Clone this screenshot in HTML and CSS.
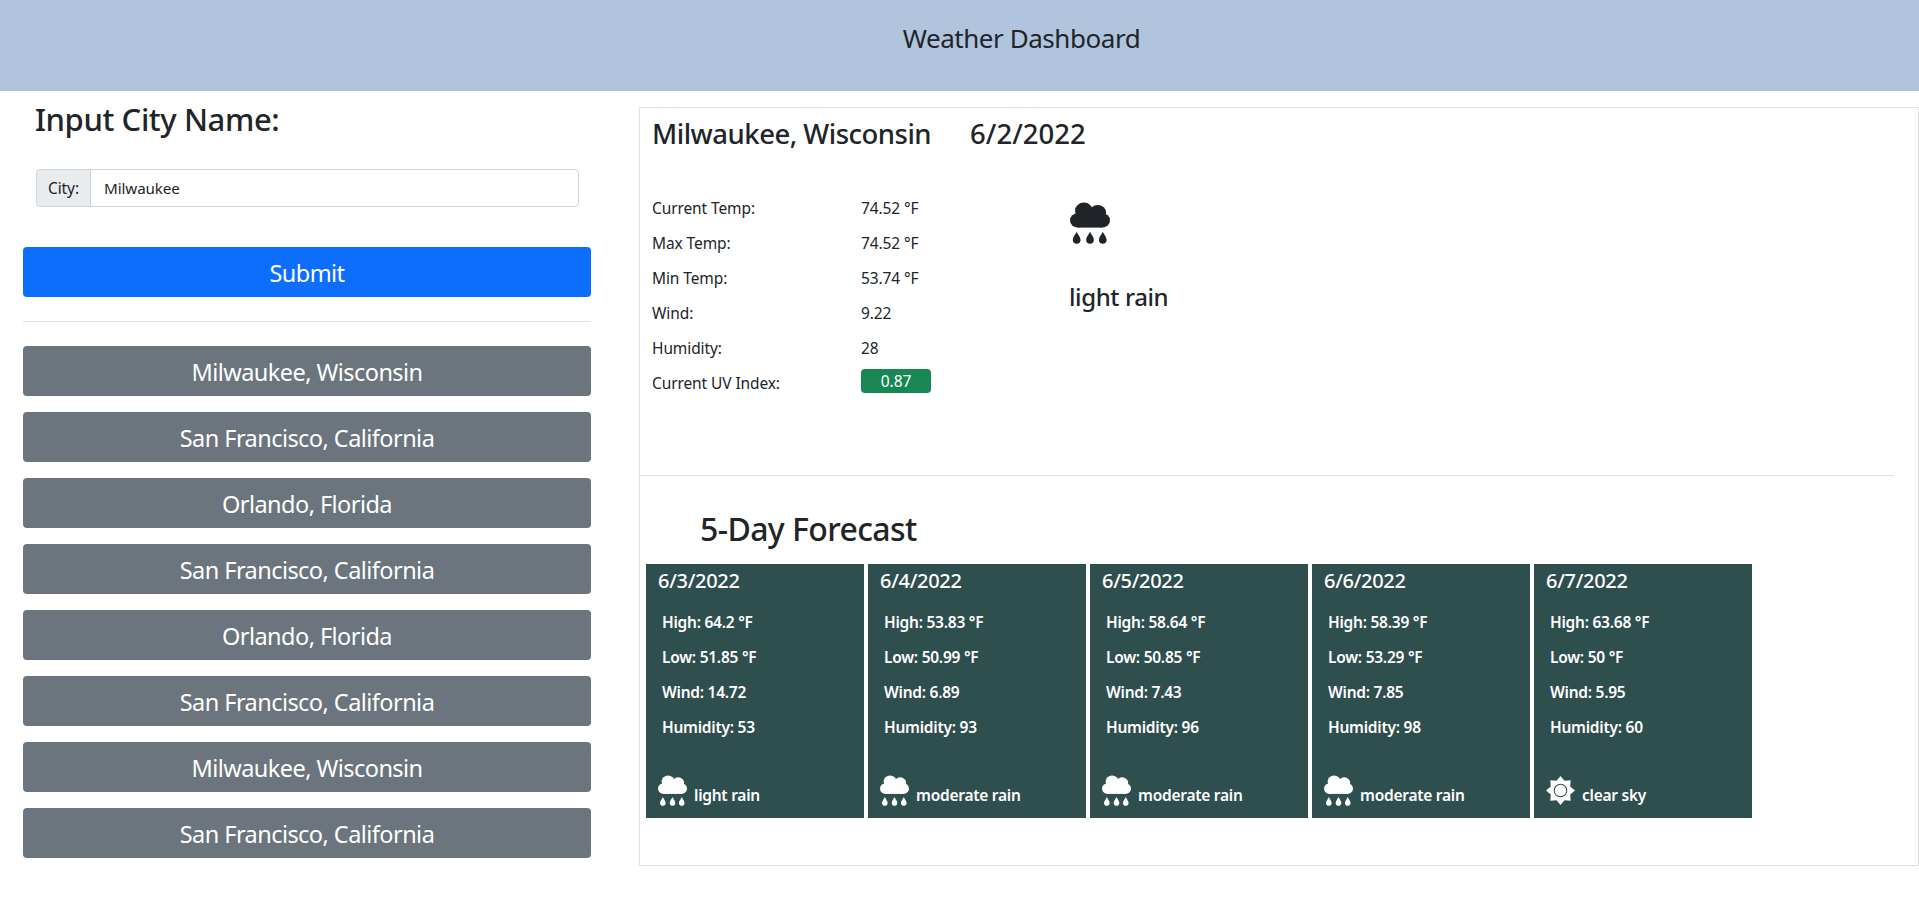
FILE: index.html
```html
<!DOCTYPE html>
<html lang="en">
<head>
<meta charset="utf-8">
<title>Weather Dashboard</title>
<link rel="stylesheet" href="styles.css">
</head>
<body>
<svg class="defs" width="0" height="0" aria-hidden="true">
  <symbol id="rain" viewBox="0 0 36 41" preserveAspectRatio="none">
    <circle cx="12.500" cy="8.500" r="8"/>
    <circle cx="25" cy="10.500" r="7.500"/>
    <circle cx="7" cy="18" r="7"/>
    <circle cx="29" cy="18" r="7"/>
    <rect x="7" y="12" width="22" height="13"/>
    <path d="M6 29C7 31.500 9.500 34 9.500 37C9.500 39.200 8 40.800 6 40.800C4 40.800 2.500 39.200 2.500 37C2.500 34 5 31.500 6 29Z"/>
    <path d="M18 29C19 31.500 21.500 34 21.500 37C21.500 39.200 20 40.800 18 40.800C16 40.800 14.500 39.200 14.500 37C14.500 34 17 31.500 18 29Z"/>
    <path d="M29.500 29C30.500 31.500 33 34 33 37C33 39.200 31.500 40.800 29.500 40.800C27.500 40.800 26 39.200 26 37C26 34 28.500 31.500 29.500 29Z"/>
  </symbol>
  <symbol id="sun" viewBox="0 0 29 29">
    <path fill-rule="evenodd" d="M14.500 0L18.500 4.800L24.700 4.300L24.200 10.500L29 14.500L24.200 18.500L24.700 24.700L18.500 24.200L14.500 29L10.500 24.200L4.300 24.700L4.800 18.500L0 14.500L4.800 10.500L4.300 4.300L10.500 4.800ZM14.500 7.700A6.800 6.800 0 1 0 14.500 21.300A6.800 6.800 0 1 0 14.500 7.700ZM14.500 8.700A5.800 5.800 0 1 1 14.500 20.300A5.800 5.800 0 1 1 14.500 8.700Z"/>
  </symbol>
</svg>

<header class="banner"><span class="banner-title">Weather Dashboard</span></header>

<main class="layout">
  <aside class="sidebar">
    <h3 class="side-title">Input City Name:</h3>
    <div class="input-group">
      <span class="input-label">City:</span>
      <input class="input-field" type="text" value="Milwaukee">
    </div>
    <button class="btn btn-primary">Submit</button>
    <hr class="side-rule">
    <div class="history">
      <button class="btn btn-secondary">Milwaukee, Wisconsin</button>
      <button class="btn btn-secondary">San Francisco, California</button>
      <button class="btn btn-secondary">Orlando, Florida</button>
      <button class="btn btn-secondary">San Francisco, California</button>
      <button class="btn btn-secondary">Orlando, Florida</button>
      <button class="btn btn-secondary">San Francisco, California</button>
      <button class="btn btn-secondary">Milwaukee, Wisconsin</button>
      <button class="btn btn-secondary">San Francisco, California</button>
    </div>
  </aside>

  <section class="panel">
    <div class="current-head">
      <h3 class="current-city">Milwaukee, Wisconsin</h3>
      <h3 class="current-date">6/2/2022</h3>
    </div>
    <div class="current-body">
      <dl class="stats">
        <dt>Current Temp:</dt><dd>74.52 °F</dd>
        <dt>Max Temp:</dt><dd>74.52 °F</dd>
        <dt>Min Temp:</dt><dd>53.74 °F</dd>
        <dt>Wind:</dt><dd>9.22</dd>
        <dt>Humidity:</dt><dd>28</dd>
        <dt>Current UV Index:</dt><dd><span class="uv">0.87</span></dd>
      </dl>
      <div class="condition">
        <svg class="condition-icon"><use href="#rain"/></svg>
        <div class="condition-text">light rain</div>
      </div>
    </div>
    <hr class="panel-rule">
    <h3 class="forecast-title">5-Day Forecast</h3>
    <div class="cards">
      <article class="card">
        <div class="card-date">6/3/2022</div>
        <p>High: 64.2 °F</p><p>Low: 51.85 °F</p><p>Wind: 14.72</p><p>Humidity: 53</p>
        <div class="card-foot"><svg class="card-icon"><use href="#rain"/></svg><span>light rain</span></div>
      </article>
      <article class="card">
        <div class="card-date">6/4/2022</div>
        <p>High: 53.83 °F</p><p>Low: 50.99 °F</p><p>Wind: 6.89</p><p>Humidity: 93</p>
        <div class="card-foot"><svg class="card-icon"><use href="#rain"/></svg><span>moderate rain</span></div>
      </article>
      <article class="card">
        <div class="card-date">6/5/2022</div>
        <p>High: 58.64 °F</p><p>Low: 50.85 °F</p><p>Wind: 7.43</p><p>Humidity: 96</p>
        <div class="card-foot"><svg class="card-icon"><use href="#rain"/></svg><span>moderate rain</span></div>
      </article>
      <article class="card">
        <div class="card-date">6/6/2022</div>
        <p>High: 58.39 °F</p><p>Low: 53.29 °F</p><p>Wind: 7.85</p><p>Humidity: 98</p>
        <div class="card-foot"><svg class="card-icon"><use href="#rain"/></svg><span>moderate rain</span></div>
      </article>
      <article class="card">
        <div class="card-date">6/7/2022</div>
        <p>High: 63.68 °F</p><p>Low: 50 °F</p><p>Wind: 5.95</p><p>Humidity: 60</p>
        <div class="card-foot"><svg class="card-icon"><use href="#sun"/></svg><span>clear sky</span></div>
      </article>
    </div>
  </section>
</main>
</body>
</html>
```

FILE: styles.css
```css
* { box-sizing: border-box; }
html, body { margin: 0; padding: 0; }
body {
  font-family: "Noto Sans", "Open Sans", sans-serif;
  font-size: 16px;
  color: #212529;
  background: #fff;
  overflow: hidden;
}
.defs { position: absolute; }

.banner {
  height: 91px;
  background: #b0c4de;
  display: flex;
  justify-content: center;
  padding-top: 20px;
  padding-left: 124px;
}
.banner-title { font-size: 26px; line-height: 36px; letter-spacing: -0.45px; }

.layout { display: flex; align-items: flex-start; }
.sidebar { width: 639px; padding: 0 48px 0 23px; flex: none; }
.side-title {
  margin: 11px 0 0 12px;
  font-size: 31px;
  line-height: 34px;
  font-weight: 500;
  letter-spacing: -0.4px;
}
.input-group { display: flex; height: 38px; margin: 33px 0 0 13px; width: 543px; }
.input-label {
  flex: none;
  width: 55px;
  display: flex;
  align-items: center;
  justify-content: center;
  background: #e9ecef;
  border: 1px solid #ced4da;
  border-radius: 4px 0 0 4px;
  font-size: 15.5px;
  letter-spacing: -0.1px;
}
.input-field {
  flex: 1;
  min-width: 0;
  margin-left: -1px;
  padding: 0 13px;
  border: 1px solid #ced4da;
  border-radius: 0 4px 4px 0;
  font: inherit;
  font-size: 15.2px;
  color: #212529;
  letter-spacing: -0.1px;
  outline: none;
}
.btn {
  display: block;
  width: 100%;
  height: 50px;
  border: 0;
  border-radius: 4px;
  color: #fff;
  font-family: inherit;
  font-size: 23.5px;
  letter-spacing: -0.55px;
  line-height: 1;
  padding: 4px 0 0;
}
.btn-primary { background: #0d6efd; margin-top: 40px; }
.btn-secondary { background: #6c757d; }
.side-rule { margin: 24px 0 24px; border: 0; border-top: 1px solid #dfe1e3; }
.history { display: flex; flex-direction: column; gap: 16px; }

.panel {
  flex: 1;
  height: 759px;
  margin-top: 16px;
  border: 1px solid #dfe1e3;
}
.current-head { display: flex; padding: 9px 0 0 12px; }
.current-city, .current-date {
  margin: 0;
  font-size: 27.5px;
  line-height: 34px;
  font-weight: 500;
  letter-spacing: -0.5px;
}
.current-date { margin-left: 39px; letter-spacing: 0; }
.current-body { display: flex; height: 324px; padding: 46px 0 0 12px; }
.stats {
  display: grid;
  grid-template-columns: 209px 70px;
  grid-auto-rows: 35px;
  margin: 0;
  font-size: 15.5px;
  letter-spacing: -0.1px;
  line-height: 22px;
  align-content: start;
}
.stats dt, .stats dd { margin: 0; font-weight: 400; }
.uv {
  display: block;
  height: 24px;
  line-height: 24px;
  margin-top: -3px;
  text-align: center;
  color: #fff;
  background: #198754;
  border-radius: 4px;
}
.condition { margin: 5px 0 0 138px; }
.condition-icon { display: block; width: 40px; height: 42px; margin-left: 1px; fill: #212529; }
.condition-text { margin-top: 38px; font-size: 24px; line-height: 29px; font-weight: 500; letter-spacing: -0.4px; }
.panel-rule { margin: 0 24px 0 0; border: 0; border-top: 1px solid #dfe1e3; }
.forecast-title {
  margin: 33px 0 0 60px;
  font-size: 32px;
  line-height: 40px;
  font-weight: 500;
  letter-spacing: -0.6px;
}
.cards { display: flex; gap: 4px; margin: 15px 0 0 6px; }
.card {
  width: 218px;
  height: 254px;
  padding: 3px 12px 0;
  background: #2f4f4f;
  color: #fff;
  display: flex;
  flex-direction: column;
}
.card-date { font-size: 20px; line-height: 28px; font-weight: 500; letter-spacing: -0.3px; }
.card p {
  margin: 0 0 0 4px;
  height: 35px;
  line-height: 35px;
  font-size: 15.5px;
  font-weight: 600;
  letter-spacing: -0.25px;
}
.card-date + p { margin-top: 10px; }
.card-foot { display: flex; align-items: flex-end; gap: 7px; margin: auto 0 0 0; padding-bottom: 12px; font-size: 15.5px; font-weight: 600; letter-spacing: -0.25px; line-height: 22px; }
.card-icon { width: 29px; height: 31px; fill: #fff; flex: none; }
```
